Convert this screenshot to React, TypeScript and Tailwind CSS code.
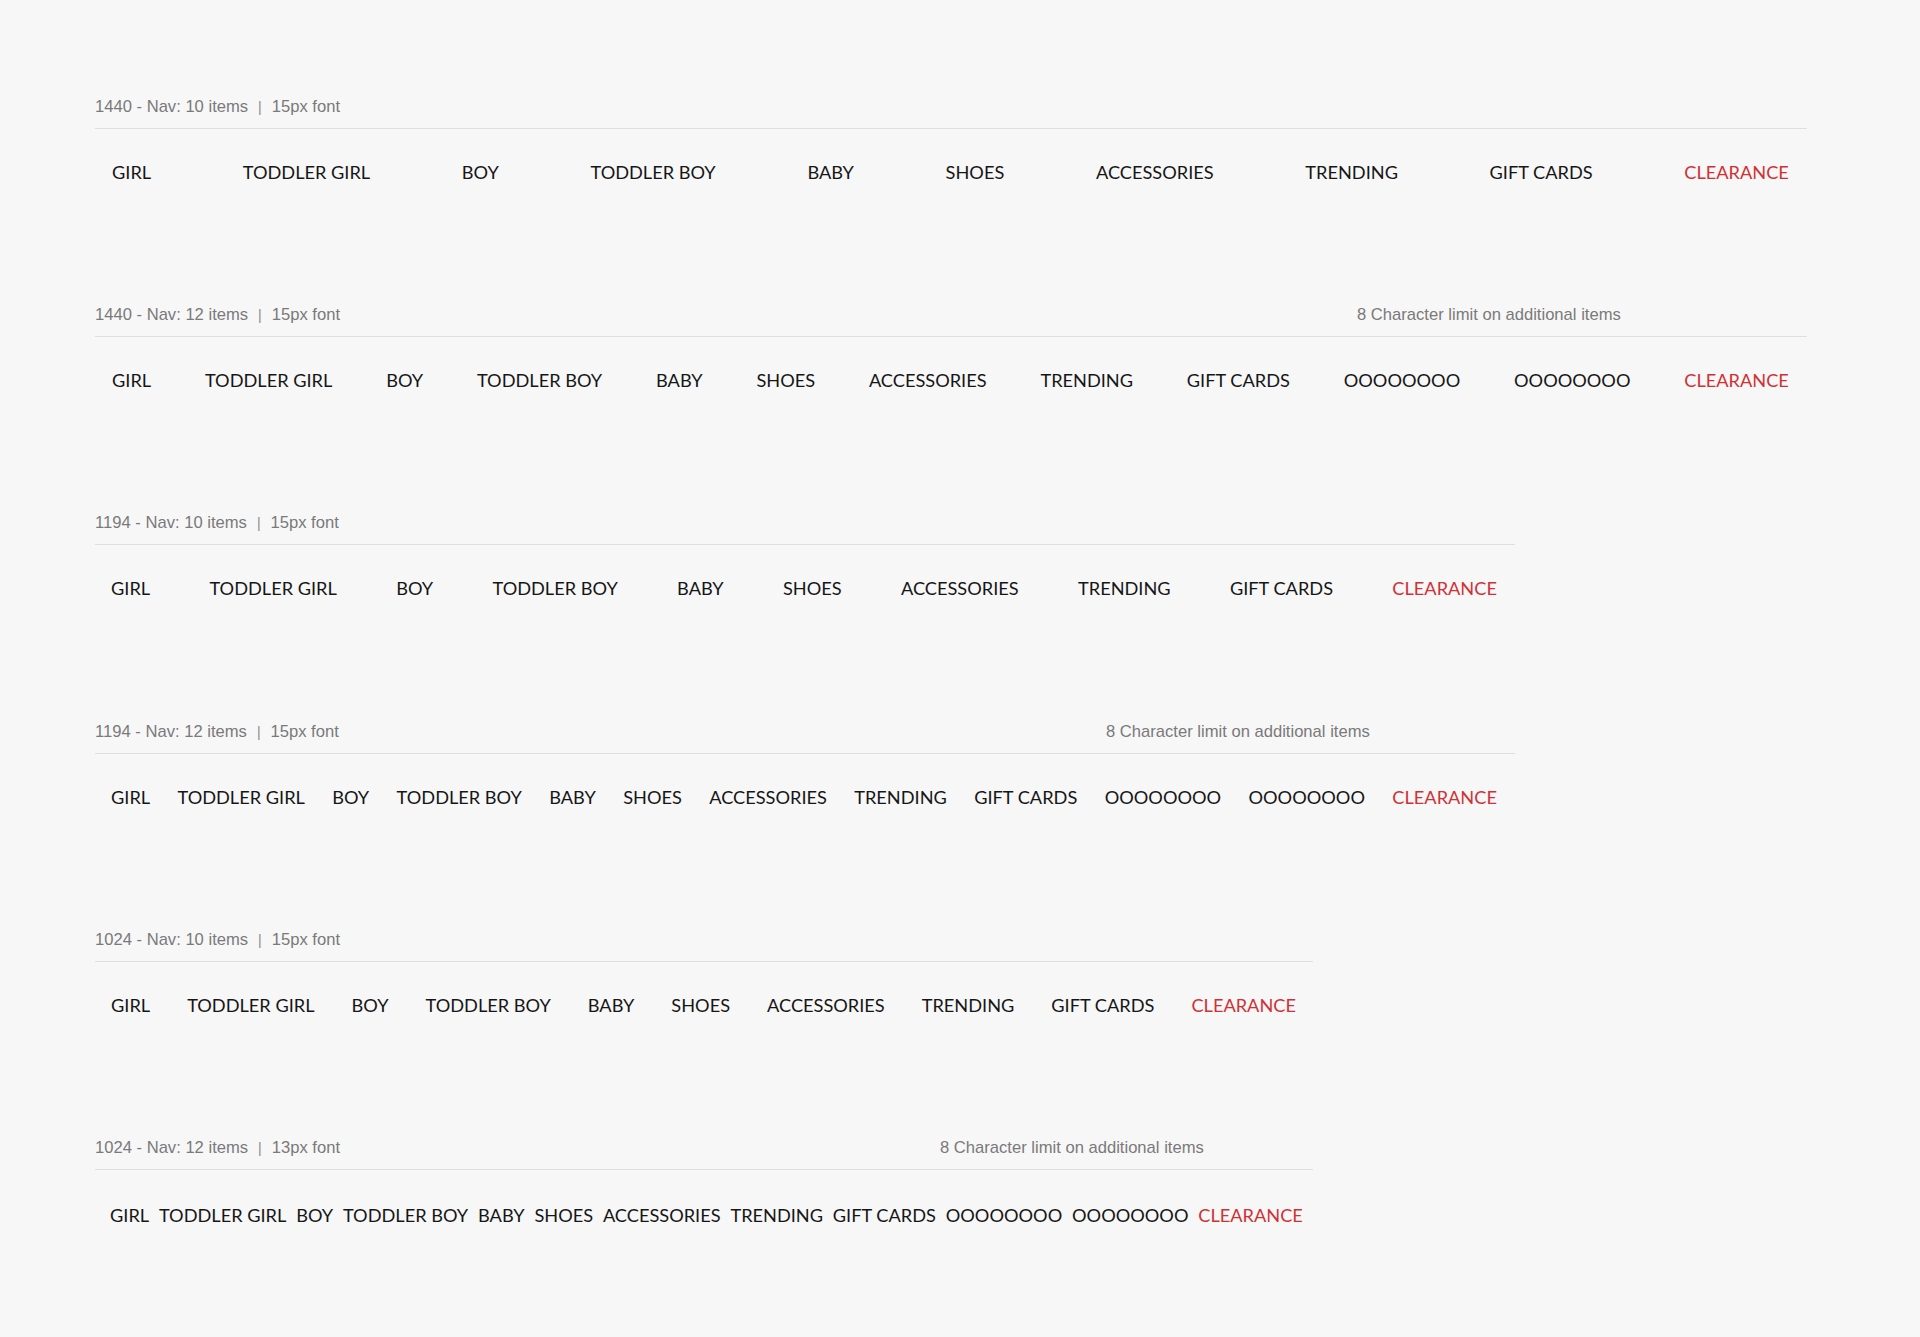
import React from 'react';

const BASE_ITEMS = ['GIRL', 'TODDLER GIRL', 'BOY', 'TODDLER BOY', 'BABY', 'SHOES', 'ACCESSORIES', 'TRENDING', 'GIFT CARDS'];

interface NavSpec {
  title: string;
  font: string;
  extra: boolean;
  widthClass: string;
  padClass: string;
  noteClass?: string;
  navClass?: string;
}

const SPECS: NavSpec[] = [
  { title: '1440 - Nav: 10 items', font: '15px font', extra: false, widthClass: 'w-[1712px]', padClass: 'pl-[17px] pr-[18px]' },
  { title: '1440 - Nav: 12 items', font: '15px font', extra: true, widthClass: 'w-[1712px]', padClass: 'pl-[17px] pr-[18px]', noteClass: 'w-[1262px]' },
  { title: '1194 - Nav: 10 items', font: '15px font', extra: false, widthClass: 'w-[1420px]', padClass: 'pl-[16px] pr-[18px]' },
  { title: '1194 - Nav: 12 items', font: '15px font', extra: true, widthClass: 'w-[1420px]', padClass: 'pl-[16px] pr-[18px]', noteClass: 'w-[1011px]' },
  { title: '1024 - Nav: 10 items', font: '15px font', extra: false, widthClass: 'w-[1218px]', padClass: 'pl-[16px] pr-[17px]' },
  { title: '1024 - Nav: 12 items', font: '13px font', extra: true, widthClass: 'w-[1218px]', padClass: 'pl-[15px] pr-[10px]', noteClass: 'w-[845px]', navClass: 'pt-[2px]' },
];

const NavSample: React.FC<{ spec: NavSpec }> = ({ spec }) => {
  const items = spec.extra ? [...BASE_ITEMS, 'OOOOOOOO', 'OOOOOOOO'] : BASE_ITEMS;

  return (
    <section className={`h-[208.2px] ${spec.widthClass}`}>
      {/* spec label + optional note */}
      <div className="flex h-5 items-center text-[16.6px] leading-5 text-[#7a7a7a] font-['Liberation_Sans',Arial,sans-serif]">
        <div className={spec.noteClass ? `${spec.noteClass} shrink-0` : ''}>
          <span>{spec.title}</span>
          <span className="mx-[10px] text-[14px] text-[#8a8a8a]">|</span>
          <span>{spec.font}</span>
        </div>
        {spec.noteClass && <span>8 Character limit on additional items</span>}
      </div>
      <div className="mt-[11px] border-b border-[#dfdfdf]" />

      <nav className={`mt-[31px] flex justify-between whitespace-nowrap text-[18.2px] leading-6 text-[#161616] font-['Lato',sans-serif] ${spec.padClass} ${spec.navClass ?? ''}`}>
        {items.map((item, i) => (
          <span key={i}>{item}</span>
        ))}
        <span className="text-[#cf3236]">CLEARANCE</span>
      </nav>
    </section>
  );
};

export default function App() {
  return (
    <div className="min-h-[1337px] w-full bg-[#f7f7f7] pl-[95px] pt-[97px]">
      {SPECS.map((spec, i) => (
        <NavSample key={i} spec={spec} />
      ))}
    </div>
  );
}
